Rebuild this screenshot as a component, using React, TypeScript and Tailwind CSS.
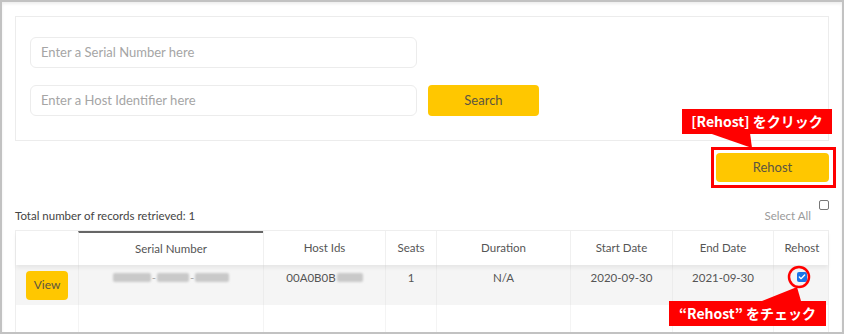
import { Check } from 'lucide-react'

const cols = 'grid grid-cols-[62px_185px_122px_51px_134px_102px_101px_57px]'

const headers = ['', 'Serial Number', 'Host Ids', 'Seats', 'Duration', 'Start Date', 'End Date', 'Rehost']

function Blur({ w }: { w: number }) {
  return <span className="inline-block h-[9px] rounded-[2px] bg-[#c9c9c9] blur-[1.2px]" style={{ width: w }} />
}

function Callout({ text, className }: { text: string; className: string }) {
  return (
    <div
      className={`absolute flex items-center justify-center whitespace-pre bg-[#ff0000] text-[14px] font-bold text-white [font-family:'Noto_Sans_CJK_JP','Noto_Sans',sans-serif] ${className}`}
    >
      {text}
    </div>
  )
}

const cell = 'flex items-start justify-center border-l border-[#ececec] pt-[4px] leading-[17px]'

export default function App() {
  return (
    <div className="relative h-[334px] w-[844px] overflow-hidden border-2 border-[#c2c2c2] bg-white px-[13px] pt-[14px] text-[#555] shadow-[inset_0_2px_3px_rgba(0,0,0,0.07)] [font-family:Lato,'Noto_Sans',sans-serif]">
      <div className="h-[125px] border border-[#ececec] px-[14px] pt-[20px]">
        <div className="flex h-[31px] w-[387px] items-center rounded-[6px] border border-[#ececec] px-[10px] text-[13px] text-[#a5a5a5]">
          Enter a Serial Number here
        </div>
        <div className="mt-[17px] flex items-center gap-[11px]">
          <div className="flex h-[31px] w-[387px] items-center rounded-[6px] border border-[#ececec] px-[10px] text-[13px] text-[#a5a5a5]">
            Enter a Host Identifier here
          </div>
          <button
            type="button"
            className="h-[31px] w-[111px] rounded-[4px] bg-[#ffc700] text-[13px] text-[#5b5540]"
          >
            Search
          </button>
        </div>
      </div>

      <div className="mt-[12px] flex justify-end">
        <button
          type="button"
          className="h-[29px] w-[113px] rounded-[4px] bg-[#ffc700] text-[13px] text-[#5b5540]"
        >
          Rehost
        </button>
      </div>

      <div className="flex h-[48px] items-start justify-between">
        <p className="mt-[25px] text-[11.5px] text-[#444]">Total number of records retrieved: 1</p>
        <div className="mt-[18px] flex items-start gap-[8px]">
          <span className="mt-[7px] text-[11.5px] text-[#9a9a9a]">Select All</span>
          <span className="h-[10px] w-[10px] rounded-[2px] border border-[#777] bg-white" />
        </div>
      </div>

      <div className="border border-[#eeeeee]">
        <div className={`${cols} relative h-[34px] bg-white text-[11.5px] shadow-[0_3px_4px_rgba(0,0,0,0.06)]`}>
          {headers.map((h, i) => (
            <div
              key={i}
              className={`flex items-center justify-center border-[#f0f0f0] ${i > 0 ? 'border-l' : ''} ${i === 1 ? 'border-t-2 border-t-[#666]' : ''}`}
            >
              {h}
            </div>
          ))}
        </div>
        <div className={`${cols} h-[40px] bg-[#f5f5f5] text-[11.5px]`}>
          <div className="flex items-center justify-center">
            <button type="button" className="h-[29px] w-[42px] rounded-[4px] bg-[#ffc700] text-[12px] text-[#5b5540]">
              View
            </button>
          </div>
          <div className={cell}>
            <span className="flex h-[17px] items-center gap-[1px] text-[#aaa]">
              <Blur w={38} />-<Blur w={32} />-<Blur w={34} />
            </span>
          </div>
          <div className={cell}>
            <span className="flex h-[17px] items-center gap-[1px]">
              00A0B0B<Blur w={26} />
            </span>
          </div>
          <div className={cell}>1</div>
          <div className={cell}>N/A</div>
          <div className={cell}>2020-09-30</div>
          <div className={cell}>2021-09-30</div>
          <div className="flex items-start justify-center border-l border-[#ececec] pt-[7px]">
            <span className="flex h-[10px] w-[10px] items-center justify-center rounded-[2px] bg-[#1a73e8]">
              <Check className="h-[8px] w-[8px] text-white" strokeWidth={4} />
            </span>
          </div>
        </div>
        <div className={`${cols} h-[40px] bg-white`}>
          {headers.map((h, i) => (
            <div key={h + i} className={i > 0 ? 'border-l border-[#f4f4f4]' : ''} />
          ))}
        </div>
      </div>

      {/* annotations */}
      <div className="absolute left-[709px] top-[145px] h-[41px] w-[125px] border-[3px] border-[#ff0000]" />
      <Callout text="[Rehost] をクリック" className="left-[680px] top-[107px] h-[25px] w-[150px]" />
      <svg className="absolute left-0 top-0" width="844" height="334" viewBox="0 0 844 334">
        <polygon points="707,131 748,131 750,146" fill="#ff0000" />
        <polygon points="760,299 795,285 799,299" fill="#ff0000" />
        <circle cx="797" cy="275" r="10" fill="none" stroke="#ff0000" strokeWidth="2.5" />
      </svg>
      <Callout text="“Rehost” をチェック" className="left-[667px] top-[299px] h-[25px] w-[157px]" />
    </div>
  )
}
